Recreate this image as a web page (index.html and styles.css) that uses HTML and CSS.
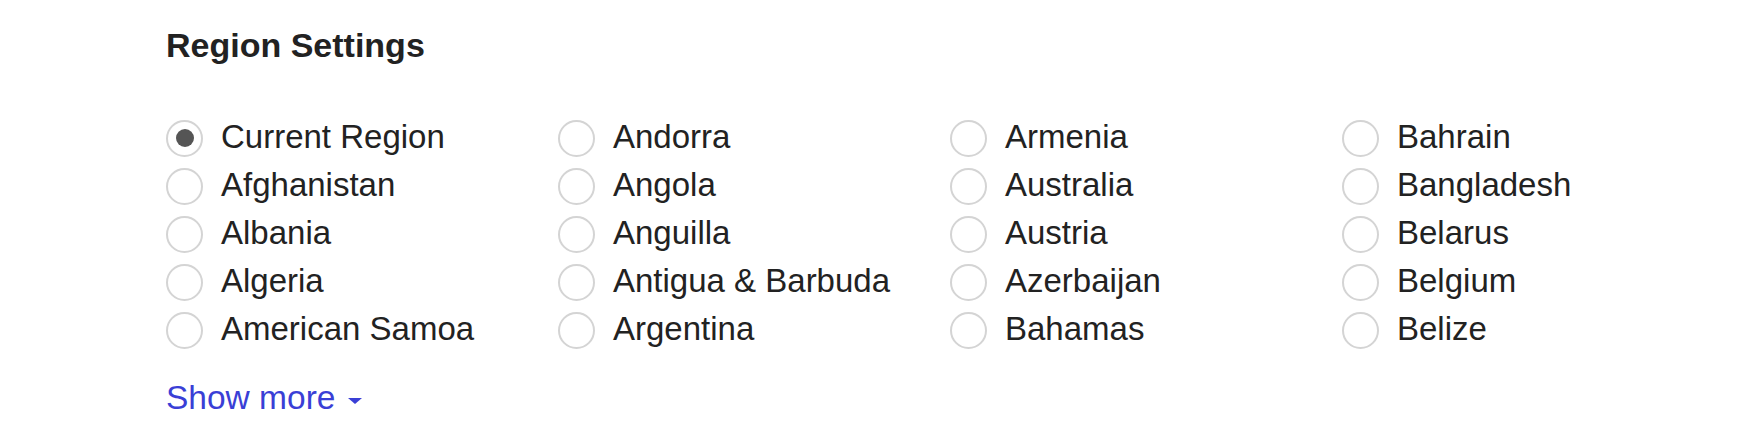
FILE: index.html
```html
<!DOCTYPE html>
<html lang="en">

<head>
  <meta charset="UTF-8">
  <meta name="viewport" content="width=device-width, initial-scale=1.0">
  <link rel="stylesheet" href="styles.css">
  <title>Region Settings</title>
</head>

<body>

  <div class="settings">
    <h1>Region Settings</h1>

    <div class="region-list">
      <label class="region"><input type="radio" name="region" checked><span>Current Region</span></label>
      <label class="region"><input type="radio" name="region"><span>Afghanistan</span></label>
      <label class="region"><input type="radio" name="region"><span>Albania</span></label>
      <label class="region"><input type="radio" name="region"><span>Algeria</span></label>
      <label class="region"><input type="radio" name="region"><span>American Samoa</span></label>

      <label class="region"><input type="radio" name="region"><span>Andorra</span></label>
      <label class="region"><input type="radio" name="region"><span>Angola</span></label>
      <label class="region"><input type="radio" name="region"><span>Anguilla</span></label>
      <label class="region"><input type="radio" name="region"><span>Antigua &amp; Barbuda</span></label>
      <label class="region"><input type="radio" name="region"><span>Argentina</span></label>

      <label class="region"><input type="radio" name="region"><span>Armenia</span></label>
      <label class="region"><input type="radio" name="region"><span>Australia</span></label>
      <label class="region"><input type="radio" name="region"><span>Austria</span></label>
      <label class="region"><input type="radio" name="region"><span>Azerbaijan</span></label>
      <label class="region"><input type="radio" name="region"><span>Bahamas</span></label>

      <label class="region"><input type="radio" name="region"><span>Bahrain</span></label>
      <label class="region"><input type="radio" name="region"><span>Bangladesh</span></label>
      <label class="region"><input type="radio" name="region"><span>Belarus</span></label>
      <label class="region"><input type="radio" name="region"><span>Belgium</span></label>
      <label class="region"><input type="radio" name="region"><span>Belize</span></label>
    </div>

    <a class="show-more" href="#">Show more <span class="caret"></span></a>
  </div>

</body>

</html>
```

FILE: styles.css
```css
* {
  margin: 0;
  padding: 0;
  box-sizing: border-box;
  font-family: 'Liberation Sans', Arial, sans-serif;
}

body {
  background-color: #fff;
  color: #222;
}

.settings {
  padding: 25px 0 0 166px;
}

h1 {
  font-size: 34px;
  font-weight: bold;
  line-height: 40px;
  color: #222;
  margin-bottom: 48px;
}

.region-list {
  display: grid;
  grid-template-rows: repeat(5, 48px);
  grid-auto-flow: column;
  grid-auto-columns: 392px;
}

.region {
  display: flex;
  align-items: center;
  gap: 18px;
  font-size: 33px;
  line-height: 48px;
  cursor: pointer;
}

.region input {
  appearance: none;
  -webkit-appearance: none;
  width: 37px;
  height: 37px;
  border: 2px solid #d4d4d4;
  border-radius: 50%;
  display: flex;
  align-items: center;
  justify-content: center;
  margin-top: 2px;
  flex-shrink: 0;
}

.region input:checked::after {
  content: '';
  width: 18px;
  height: 18px;
  border-radius: 50%;
  background: #555;
}

.show-more {
  display: inline-flex;
  align-items: center;
  gap: 13px;
  margin-top: 21px;
  font-size: 33.5px;
  line-height: 48px;
  color: #3a3fd6;
  text-decoration: none;
}

.caret {
  width: 0;
  height: 0;
  border-left: 7px solid transparent;
  border-right: 7px solid transparent;
  border-top: 6px solid #3a3fd6;
  margin-top: 6px;
}
```
